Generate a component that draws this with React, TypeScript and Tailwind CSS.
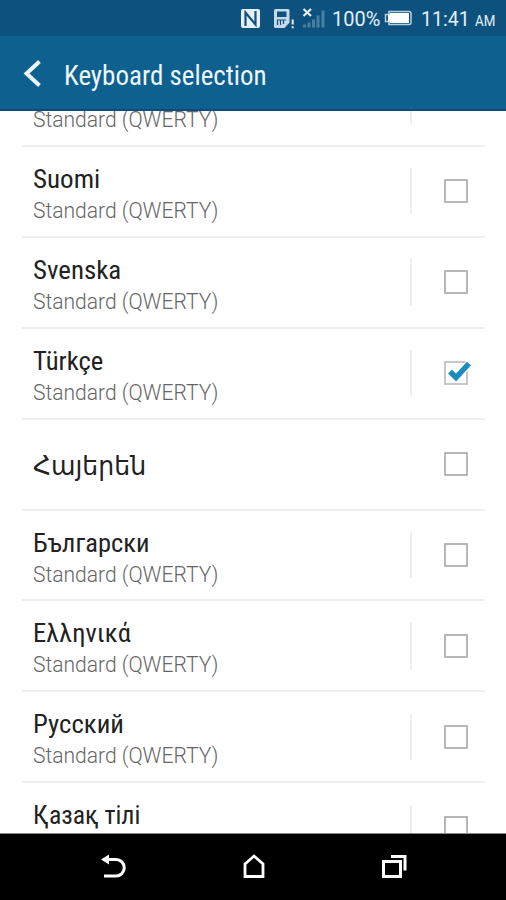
import React from "react";

type Language = {
  name: string;
  nameStyle: string;
  layout?: string;
  checked?: boolean;
};

const languages: Language[] = [
  { name: "Suomi", nameStyle: "scale-x-[1.04]", layout: "Standard (QWERTY)" },
  { name: "Svenska", nameStyle: "scale-x-[1.035]", layout: "Standard (QWERTY)" },
  { name: "Türkçe", nameStyle: "scale-x-[1.025]", layout: "Standard (QWERTY)", checked: true },
  { name: "Հայերեն", nameStyle: "scale-x-[1.075]" },
  { name: "Български", nameStyle: "scale-x-[1.02]", layout: "Standard (QWERTY)" },
  { name: "Ελληνικά", nameStyle: "scale-x-[1.02]", layout: "Standard (QWERTY)" },
  { name: "Русский", nameStyle: "scale-x-[1.03]", layout: "Standard (QWERTY)" },
  { name: "Қазақ тілі", nameStyle: "scale-x-[0.99]", layout: "Standard (QWERTY)" },
];

const StatusBar = () => (
  <div className="flex h-9 items-center bg-[#0d527e] pt-px text-[#e6effa]">
    <svg className="ml-60 shrink-0" width="90" height="24" viewBox="240 6 90 24" fill="none">
      {/* NFC */}
      <rect x="241" y="8" width="19" height="19" rx="2" fill="#e6effa" />
      <path d="M245.500 25v-13.500l10 12v-13.500" stroke="#0d527e" strokeWidth="2.200" />
      {/* SIM warning */}
      <path d="M275.500 8h12.500a1.500 1.500 0 0 1 1.500 1.500v12l-5 5.500h-9a1.500 1.500 0 0 1-1.500-1.500v-16a1.500 1.500 0 0 1 1.500-1.500z" fill="#c5d9e8" />
      <path d="M277 10.500h9.500v5.500h-9.500z" fill="#0d527e" />
      <path d="M277.500 19v5M280.500 19v5M283.500 19v4M277 19h9" stroke="#0d527e" strokeWidth="1.200" />
      <path d="M292.700 18.500v5M292.700 25.200v2" stroke="#e6effa" strokeWidth="2" />
      {/* No signal */}
      <path d="M303.500 8l7.500 7M311 8l-7.500 7" stroke="#e6effa" strokeWidth="2.200" />
      <path d="M304.500 26.500v-3M309 26.500v-5M313.500 26.500v-8M318 26.500v-12M323 26.500v-17" stroke="#477fa3" strokeWidth="3" />
    </svg>
    <span className="ml-[2px] w-[51px] origin-left scale-x-[0.95] text-[21px] leading-6 whitespace-nowrap">100%</span>
    <svg className="-mt-px shrink-0" width="30" height="18" viewBox="383 9 30 18" fill="none">
      <path d="M389 11.500h20a2 2 0 0 1 2 2v9a2 2 0 0 1-2 2h-20v-3h-3.500v-7h3.500z" stroke="#b7cfdf" strokeWidth="1.500" />
      <path d="M390 13h19v10h-19v-1.500h-2v-7h2z" fill="#fff" />
    </svg>
    <span className="ml-2 w-[54px] origin-left scale-x-[0.93] text-[21px] leading-6 whitespace-nowrap">11:41</span>
    <span className="mt-1 origin-left scale-x-[0.95] text-[14px] leading-5">AM</span>
  </div>
);

const Header = () => (
  <div className="flex h-[75px] items-center border-b-2 border-[#0a4a7f] bg-[#0e608e] pt-[3px]">
    <svg className="ml-[23px] shrink-0" width="18" height="28" viewBox="0 0 18 28" fill="none">
      <path d="M16.500 1.500l-13 12 13 12" stroke="#eef6fd" strokeWidth="4" />
    </svg>
    <h1 className="mt-[3px] ml-[23px] origin-left text-[27px] leading-8 whitespace-nowrap text-[#eef6fd] font-stretch-condensed">
      Keyboard selection
    </h1>
  </div>
);

const Checkbox = ({ checked }: { checked?: boolean }) => (
  <svg className="shrink-0" width="30" height="30" viewBox="0 0 30 30" fill="none">
    <rect x="3" y="4" width="22" height="22" stroke={checked ? "#b5b5b5" : "#a0a0a0"} strokeWidth="1.500" />
    {checked && (
      <>
        <path d="M25 3v11" stroke="#fff" strokeWidth="3" />
        <path d="M8 13.500l6 6 13-14" stroke="#1c8cc0" strokeWidth="5.500" />
      </>
    )}
  </svg>
);

const Layout = ({ text }: { text: string }) => (
  <p className="mt-[3px] w-fit origin-left scale-x-[0.957] font-['Roboto',sans-serif] text-[22px] leading-[26px] font-light whitespace-nowrap text-[#666]">
    {text}
  </p>
);

const Row = ({ name, nameStyle, layout, checked }: Language) => (
  <li className="ml-[22px] flex h-[90.900px] w-[463px] shrink-0 items-center border-b-2 border-[#eeeeee]">
    <div className="ml-[11px] w-[377px] pt-[4px]">
      <p className={`w-fit origin-left text-[26px] leading-8 whitespace-nowrap text-[#222] font-stretch-condensed ${nameStyle}`}>
        {name}
      </p>
      {layout && <Layout text={layout} />}
    </div>
    <div className={`h-[46px] w-[2px] ${layout ? "bg-[#eeeeee]" : ""}`} />
    <div className="ml-[30px]">
      <Checkbox checked={checked} />
    </div>
  </li>
);

const NavBar = () => (
  <div className="flex h-[67px] items-center justify-between border-t border-[#888] bg-black px-[99px]">
    <svg width="30" height="28" viewBox="0 0 30 28" fill="none">
      <path d="M8 6.500h9a8 8 0 0 1 0 16.500H5" stroke="#fff" strokeWidth="3" />
      <path d="M2 6.500l8-5v10z" fill="#fff" />
    </svg>
    <svg className="-ml-[3px]" width="26" height="28" viewBox="0 0 26 28" fill="none">
      <path d="M4 11l9-8 9 8v12.500H4z" stroke="#fff" strokeWidth="2.800" />
    </svg>
    <svg className="-mr-[2px]" width="28" height="28" viewBox="0 0 28 28" fill="none">
      <path d="M2.500 8.500h17v15h-17zM10 3.500h14v14" stroke="#fff" strokeWidth="3" />
    </svg>
  </div>
);

const App = () => {
  return (
    <div className="flex h-[900px] w-[506px] flex-col overflow-hidden bg-white font-['Roboto','Noto_Sans','DejaVu_Sans',sans-serif]">
      <StatusBar />
      <Header />
      <ul className="flex h-[722px] flex-col overflow-hidden font-['Roboto_Condensed','Roboto','Noto_Sans','DejaVu_Sans',sans-serif]">
        {/* Row scrolled under the header */}
        <li className="ml-[22px] flex h-[36px] w-[463px] shrink-0 items-start border-b-2 border-[#eeeeee]">
          <div className="-mt-[7px] ml-[11px] w-[377px]">
            <Layout text="Standard (QWERTY)" />
          </div>
          <div className="h-[13px] w-[2px] bg-[#eeeeee]" />
        </li>
        {languages.map((language) => (
          <Row key={language.name} {...language} />
        ))}
      </ul>
      <NavBar />
    </div>
  );
};

export default App;
